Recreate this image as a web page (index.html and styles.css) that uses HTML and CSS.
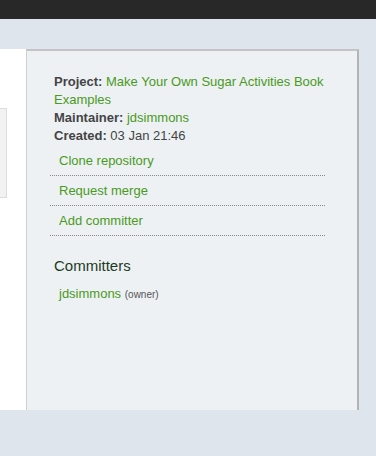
FILE: index.html
```html
<!DOCTYPE HTML>
<html>
<head>
<meta http-equiv="Content-Type" content="text/html; charset=utf-8">
<title>project</title>
<link rel="stylesheet" href="styles.css">
</head>
<body>
<div class="topbar"></div>
<div class="page">
	<div class="main">
		<div class="tabbox"></div>
	</div>
	<div class="sidebar">
		<ul class="meta">
			<li><b>Project:</b> <a href="#">Make Your Own Sugar Activities Book Examples</a></li>
			<li><b>Maintainer:</b> <a href="#">jdsimmons</a></li>
			<li><b>Created:</b> 03 Jan 21:46</li>
		</ul>
		<ul class="actions">
			<li><a href="#">Clone repository</a></li>
			<li><a href="#">Request merge</a></li>
			<li><a href="#">Add committer</a></li>
		</ul>
		<h3>Committers</h3>
		<ul class="committers">
			<li><a href="#">jdsimmons</a> <small>(owner)</small></li>
		</ul>
	</div>
</div>
</body>
</html>
```

FILE: styles.css
```css
*{
	margin: 0;
	padding: 0;
}

body{
	font-family: "Liberation Sans", Arial, sans-serif;
	font-size: 13px;
	color: #444;
	background-color: #dee5ed;
}
a{
	color: #4a9a1c;
	text-decoration: none;
}
ul{
	list-style: none;
}
.topbar{
	height: 19px;
	background-color: #282828;
}
.page{
	display: flex;
	margin-top: 30px;
	width: 359px;
	height: 361px;
}
.main{
	width: 26px;
	background-color: #fff;
	padding-top: 59px;
}
.tabbox{
	width: 6px;
	height: 88px;
	border: 1px solid #ddd;
	border-left: none;
	background-color: #f2f2f2;
}
.sidebar{
	flex: 1;
	background-color: #edf1f4;
	border-left: 1px solid #cfcfcf;
	border-top: 2px solid #c4c4c4;
	border-right: 2px solid #b4b4b4;
	padding: 22px 0 0 27px;
}
.meta li{
	line-height: 18px;
	padding-right: 10px;
}
.meta b{
	color: #444;
}
.actions{
	margin: 1px 0 0 -4px;
	width: 275px;
}
.actions li{
	border-bottom: 1px dotted #888;
	height: 29px;
	line-height: 30px;
	padding-left: 9px;
}
h3{
	font-weight: normal;
	font-size: 15px;
	color: #1d3b1d;
	margin-top: 21px;
}
.committers{
	margin-top: 12px;
	padding-left: 5px;
}
.committers small{
	font-size: 10px;
	color: #555;
}
```
